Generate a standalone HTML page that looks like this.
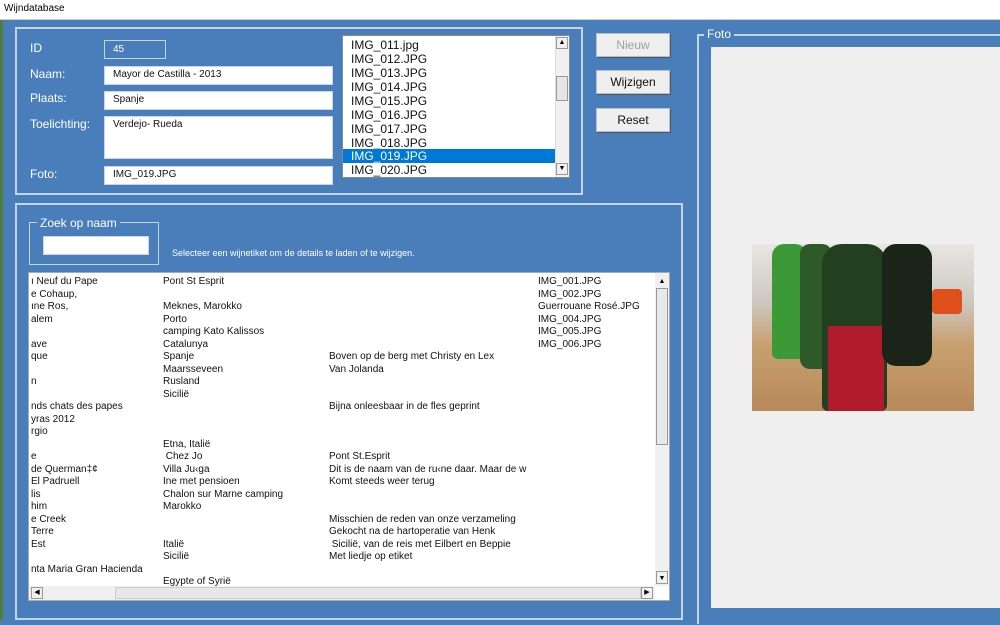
<!DOCTYPE html><html><head><meta charset="utf-8"><style>
body{margin:0;width:1000px;height:625px;overflow:hidden;background:#4a7ebb;font-family:"Liberation Sans",sans-serif;position:relative}
div,span{position:absolute;box-sizing:border-box}
.t{color:#fff;font-size:12px;white-space:nowrap}
.in{background:#fff;border:1px solid #c9d6e6;font-size:10px;padding:2px 0 0 8px;color:#111;white-space:nowrap}
.fr{border:2px solid #c4d4ea}
.btn{background:#efefef;border:1px solid #b7c0cc;box-shadow:1px 1px 0 #555;font-size:12px;text-align:center;line-height:23px;color:#111}
.r{font-size:10px;color:#111;white-space:nowrap;height:12.5px;line-height:12.5px}
.f{font-size:12px;color:#111;left:8px;height:14px;line-height:14px;white-space:nowrap}
</style></head><body>
<div style="left:0;top:0;width:1000px;height:20px;background:#fff;border-bottom:1px solid #ccc"><span style="left:4px;top:3px;font-size:10px;color:#000">Wijndatabase</span></div>
<div style="left:0;top:20px;width:3px;height:600px;background:#4f7d3a"></div>

<div class="fr" style="left:15px;top:27px;width:568px;height:168px"></div>
<span class="t" style="left:30px;top:41px">ID</span>
<div style="left:104px;top:40px;width:62px;height:19px;border:1px solid #c4d4ea;color:#fff;font-size:10px;padding:3px 0 0 8px">45</div>
<span class="t" style="left:30px;top:67px">Naam:</span>
<div class="in" style="left:104px;top:66px;width:229px;height:19px">Mayor de Castilla - 2013</div>
<span class="t" style="left:30px;top:91px">Plaats:</span>
<div class="in" style="left:104px;top:91px;width:229px;height:19px">Spanje</div>
<span class="t" style="left:30px;top:117px">Toelichting:</span>
<div class="in" style="left:104px;top:116px;width:229px;height:43px">Verdejo- Rueda</div>
<span class="t" style="left:30px;top:167px">Foto:</span>
<div class="in" style="left:104px;top:166px;width:229px;height:19px">IMG_019.JPG</div>

<div style="left:342px;top:35px;width:228px;height:143px;background:#fff;border:1px solid #888;overflow:hidden">
<span class="f" style="top:2px">IMG_011.jpg</span><span class="f" style="top:16px">IMG_012.JPG</span><span class="f" style="top:30px">IMG_013.JPG</span><span class="f" style="top:44px">IMG_014.JPG</span><span class="f" style="top:58px">IMG_015.JPG</span><span class="f" style="top:72px">IMG_016.JPG</span><span class="f" style="top:86px">IMG_017.JPG</span><span class="f" style="top:100px">IMG_018.JPG</span>
<div style="left:0;top:113px;width:212px;height:14px;background:#0078d7"></div><span class="f" style="top:113px;color:#fff">IMG_019.JPG</span>
<span class="f" style="top:127px">IMG_020.JPG</span>
<div style="left:212px;top:0;width:14px;height:141px;background:#f0f0f0;border-left:1px solid #ddd"></div>
<div style="left:213px;top:1px;width:12px;height:12px;border:1px solid #999;font-size:7px;text-align:center;line-height:10px">▲</div>
<div style="left:213px;top:40px;width:12px;height:25px;border:1px solid #999;background:#e5e5e5"></div>
<div style="left:213px;top:127px;width:12px;height:12px;border:1px solid #999;font-size:7px;text-align:center;line-height:10px">▼</div>
</div>

<div class="btn" style="left:596px;top:33px;width:74px;height:24px;color:#a0a0a0">Nieuw</div>
<div class="btn" style="left:596px;top:70px;width:74px;height:24px">Wijzigen</div>
<div class="btn" style="left:596px;top:108px;width:74px;height:24px">Reset</div>

<div class="fr" style="left:697px;top:34px;width:310px;height:590px;border-bottom:none;border-right:none"></div>
<span class="t" style="left:704px;top:27px;background:#4a7ebb;padding:0 3px">Foto</span>
<div style="left:711px;top:47px;width:289px;height:561px;background:#efefef"></div>
<div style="left:752px;top:244px;width:222px;height:167px;background:linear-gradient(180deg,#e8e6e4 0%,#ccc8c0 35%,#c8a070 60%,#b8895a 100%);overflow:hidden">
<div style="left:20px;top:0;width:35px;height:115px;background:#3b9a35;border-radius:12px 12px 6px 6px"></div>
<div style="left:48px;top:0;width:32px;height:125px;background:#2e5a2a;border-radius:10px"></div>
<div style="left:70px;top:0;width:65px;height:167px;background:#22401f;border-radius:20px 20px 6px 6px"></div>
<div style="left:76px;top:82px;width:56px;height:85px;background:#b01c2c"></div>
<div style="left:130px;top:0;width:50px;height:122px;background:#1a2418;border-radius:14px"></div>
<div style="left:180px;top:45px;width:30px;height:25px;background:#e0501c;border-radius:4px"></div>
</div>

<div class="fr" style="left:15px;top:203px;width:668px;height:417px"></div>
<div class="fr" style="left:29px;top:222px;width:130px;height:43px;border-width:1px"></div>
<span class="t" style="left:37px;top:216px;background:#4a7ebb;padding:0 3px">Zoek op naam</span>
<div style="left:43px;top:236px;width:106px;height:19px;background:#fff;border:1px solid #c9d6e6"></div>
<span class="t" style="left:172px;top:248px;font-size:9px">Selecteer een wijnetiket om de details te laden of te wijzigen.</span>

<div style="left:28px;top:272px;width:642px;height:329px;background:#fff;border:1px solid #aaa;overflow:hidden">
<div style="left:0;top:3px;width:626px;height:310px;overflow:hidden">
<span class="r" style="left:2px;top:0">ı Neuf du Pape</span><span class="r" style="left:134px;top:0">Pont St Esprit</span><span class="r" style="left:509px;top:0">IMG_001.JPG</span>
<span class="r" style="left:2px;top:12.5px">e Cohaup,</span><span class="r" style="left:509px;top:12.5px">IMG_002.JPG</span>
<span class="r" style="left:2px;top:25px">ıne Ros,</span><span class="r" style="left:134px;top:25px">Meknes, Marokko</span><span class="r" style="left:509px;top:25px">Guerrouane Rosé.JPG</span>
<span class="r" style="left:2px;top:37.5px">alem</span><span class="r" style="left:134px;top:37.5px">Porto</span><span class="r" style="left:509px;top:37.5px">IMG_004.JPG</span>
<span class="r" style="left:134px;top:50px">camping Kato Kalissos</span><span class="r" style="left:509px;top:50px">IMG_005.JPG</span>
<span class="r" style="left:2px;top:62.5px">ave</span><span class="r" style="left:134px;top:62.5px">Catalunya</span><span class="r" style="left:509px;top:62.5px">IMG_006.JPG</span>
<span class="r" style="left:2px;top:75px">que</span><span class="r" style="left:134px;top:75px">Spanje</span><span class="r" style="left:300px;top:75px">Boven op de berg met Christy en Lex</span>
<span class="r" style="left:134px;top:87.5px">Maarsseveen</span><span class="r" style="left:300px;top:87.5px">Van Jolanda</span>
<span class="r" style="left:2px;top:100px">n</span><span class="r" style="left:134px;top:100px">Rusland</span>
<span class="r" style="left:134px;top:112.5px">Sicilië</span>
<span class="r" style="left:2px;top:125px">nds chats des papes</span><span class="r" style="left:300px;top:125px">Bijna onleesbaar in de fles geprint</span>
<span class="r" style="left:2px;top:137.5px">yras 2012</span>
<span class="r" style="left:2px;top:150px">rgio</span>
<span class="r" style="left:134px;top:162.5px">Etna, Italië</span>
<span class="r" style="left:2px;top:175px">e</span><span class="r" style="left:134px;top:175px">&nbsp;Chez Jo</span><span class="r" style="left:300px;top:175px">Pont St.Esprit</span>
<span class="r" style="left:2px;top:187.5px">de Querman‡¢</span><span class="r" style="left:134px;top:187.5px">Villa Ju‹ga</span><span class="r" style="left:300px;top:187.5px">Dit is de naam van de ru‹ne daar. Maar de w</span>
<span class="r" style="left:2px;top:200px">El Padruell</span><span class="r" style="left:134px;top:200px">Ine met pensioen</span><span class="r" style="left:300px;top:200px">Komt steeds weer terug</span>
<span class="r" style="left:2px;top:212.5px">lis</span><span class="r" style="left:134px;top:212.5px">Chalon sur Marne camping</span>
<span class="r" style="left:2px;top:225px">him</span><span class="r" style="left:134px;top:225px">Marokko</span>
<span class="r" style="left:2px;top:237.5px">e Creek</span><span class="r" style="left:300px;top:237.5px">Misschien de reden van onze verzameling</span>
<span class="r" style="left:2px;top:250px">Terre</span><span class="r" style="left:300px;top:250px">Gekocht na de hartoperatie van Henk</span>
<span class="r" style="left:2px;top:262.5px">Est</span><span class="r" style="left:134px;top:262.5px">Italië</span><span class="r" style="left:300px;top:262.5px">&nbsp;Sicilië, van de reis met Eilbert en Beppie</span>
<span class="r" style="left:134px;top:275px">Sicilië</span><span class="r" style="left:300px;top:275px">Met liedje op etiket</span>
<span class="r" style="left:2px;top:287.5px">nta Maria Gran Hacienda</span>
<span class="r" style="left:134px;top:300px">Egypte of Syrië</span>
</div>
<div style="left:626px;top:0;width:14px;height:313px;background:#f0f0f0"></div>
<div style="left:627px;top:2px;width:12px;height:13px;font-size:7px;text-align:center;line-height:13px">▲</div>
<div style="left:627px;top:15px;width:12px;height:157px;border:1px solid #999;background:#e8e8e8"></div>
<div style="left:627px;top:298px;width:12px;height:13px;font-size:7px;text-align:center;line-height:13px;border:1px solid #999">▼</div>
<div style="left:0;top:313px;width:626px;height:14px;background:#f0f0f0"></div>
<div style="left:2px;top:314px;width:12px;height:12px;border:1px solid #999;font-size:7px;text-align:center;line-height:10px">◀</div>
<div style="left:86px;top:314px;width:526px;height:12px;background:#e8e8e8;border:1px solid #ccc"></div>
<div style="left:612px;top:314px;width:12px;height:12px;border:1px solid #999;font-size:7px;text-align:center;line-height:10px">▶</div>
</div>
</body></html>
